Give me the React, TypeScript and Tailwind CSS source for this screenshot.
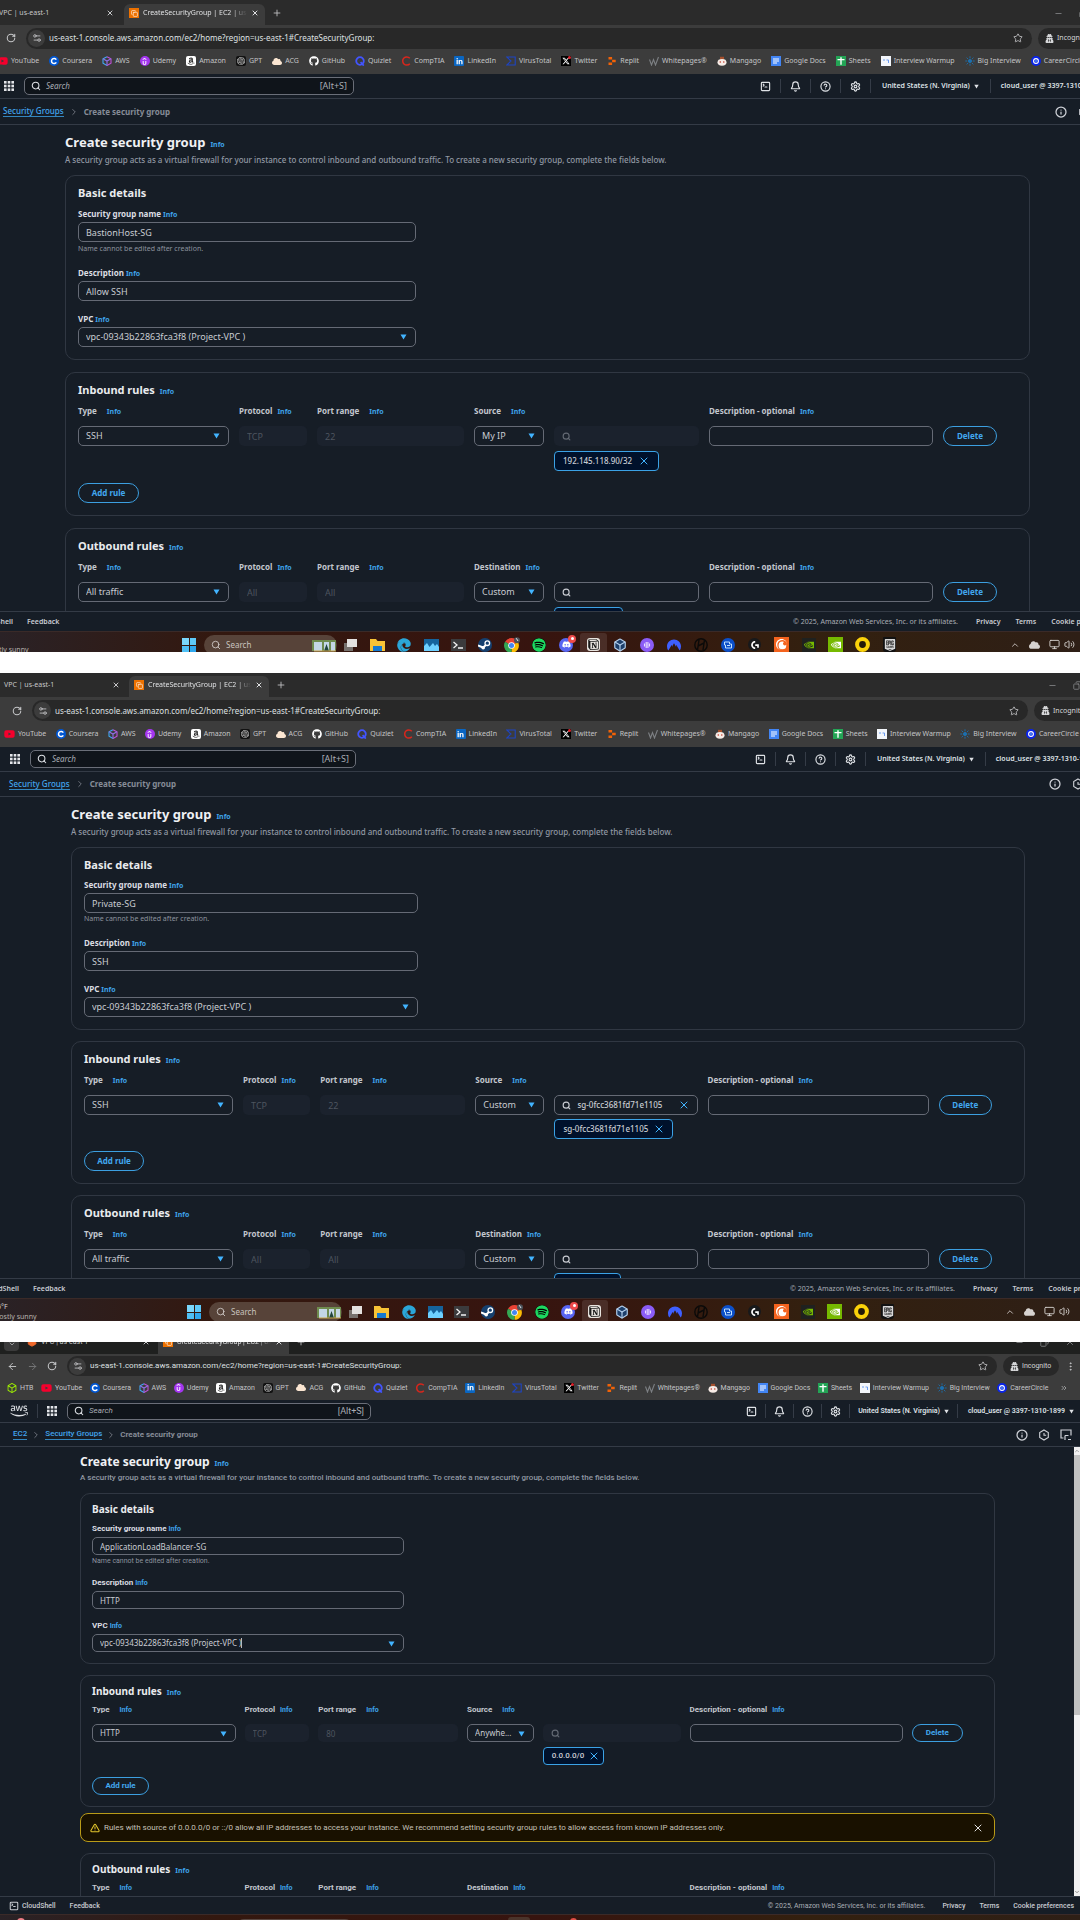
import React from "react";
import type { ReactNode } from "react";
import clsx from "clsx";
import { FaYoutube, FaAmazon, FaCloud, FaGithub, FaLinkedinIn, FaEdge, FaSpotify, FaDiscord, FaAws, FaUserSecret } from "react-icons/fa";
import { FaXTwitter } from "react-icons/fa6";
import { SiNordvpn, SiCrunchyroll, SiNvidia, SiEpicgames, SiNotion, SiOpenai, SiUdemy, SiHackthebox, SiLogitechg } from "react-icons/si";
import { AlertTriangle, ArrowLeft, ArrowRight, Bell, Box, ChevronDown, ChevronRight, ChevronUp, ChevronsRight, CircleHelp, Copy, Hexagon, Info as InfoIcon, Minus, Monitor, MoreVertical, Plus, RotateCw, Search, Settings, Settings2, SquareTerminal, Star, Volume2, X } from "lucide-react";

/* ---------- per-capture density ---------- */

type Variant = "a" | "b" | "c";

const CLS = {
  shot: {
    a: "aspect-[1080/652] font-['Noto_Sans','Open_Sans',sans-serif]",
    b: "aspect-[1080/648] font-['Noto_Sans','Open_Sans',sans-serif]",
    c: "aspect-[1080/578] font-['Roboto','Noto_Sans',sans-serif]",
  },
  strip: { a: "h-[25px] bg-[#2b2b2b]", b: "h-6 bg-[#2b2b2b]", c: "h-3 bg-[#1f201f]" },
  stripPad: { a: "-ml-[5px]", b: "ml-0", c: "ml-1" },
  firstTab: { a: "w-[129px] pl-1 pr-[10px]", b: "w-[129px] pl-1 pr-[9px]", c: "w-[139px] pl-1 pr-2" },
  activeTab: { a: "w-[141px]", b: "w-[140px]", c: "w-[131px]" },
  winMr: { a: "-mr-[34px]", b: "-mr-[28px]", c: "mr-[5px]" },
  toolbar: { a: "h-[26px] pl-[6px] -mr-[31px]", b: "h-[27px] pl-3 -mr-[27px]", c: "h-6 pl-[7px] pr-1" },
  pill: { a: "h-[21px]", b: "h-[21px]", c: "h-5" },
  marks: { a: "h-[23px] -ml-[3px] -mr-1", b: "h-[23px] ml-1 mr-px", c: "h-[22px] ml-[7px] mr-3" },
  header: { a: "h-[25px]", b: "h-[25px]", c: "h-[23px]" },
  headerIn: { a: "pl-1 -mr-[29px]", b: "pl-[10px] -mr-6", c: "pl-[10px] pr-[6px]" },
  searchBox: { a: "h-[18px] w-[330px] ml-[10px]", b: "h-[18px] w-[326px] ml-[10px]", c: "h-[17px] w-[304px] ml-[10px]" },
  iconCell: { a: "w-[30px]", b: "w-[30px]", c: "w-7" },
  region: { a: "px-[11px]", b: "px-[11px]", c: "px-2" },
  crumbs: { a: "h-[26px] pl-[3px]", b: "h-[25px] -ml-[2px]", c: "h-6 pl-[13px]" },
  crumbSep: { a: "mx-[5px]", b: "mx-[5px]", c: "mx-1" },
  crumbIcons: { a: "gap-[11px] -mr-[33px]", b: "gap-[11px] -mr-[27px]", c: "gap-[10px] mr-2" },
  main: { a: "pl-[65px] pr-[50px] pt-2", b: "pl-[71px] pr-[55px] pt-2", c: "pl-[80px] pr-[79px] pt-[7px]" },
  h1: { a: "h-[18px] text-[13px] leading-[18px]", b: "h-[18px] text-[13px] leading-[18px]", c: "h-4 text-[12px] leading-4" },
  intro: { a: "mt-[3px] mb-[9px]", b: "mt-[3px] mb-[9px]", c: "mt-[2px] mb-[9px]" },
  stack: { a: "gap-3", b: "gap-[11px]", c: "gap-[11px]" },
  card: { a: "px-3 pt-[9px] pb-3", b: "px-3 pt-[9px] pb-3", c: "px-[11px] pt-2 pb-[11px]" },
  h2: { a: "h-4 text-[11px] leading-4", b: "h-4 text-[11px] leading-4", c: "h-[14px] text-[10px] leading-[14px]" },
  fields: { a: "gap-3 w-[36%] mt-[7px]", b: "gap-3 w-[36%] mt-[6px]", c: "gap-[11px] w-[35%] mt-[7px]" },
  control: { a: "h-5 text-[9px] rounded-[5px]", b: "h-5 text-[9px] rounded-[5px]", c: "h-[18px] text-[8px] rounded-[5px] font-['Noto_Sans',sans-serif]" },
  hint: { a: "mt-px leading-3", b: "leading-3", c: "mt-px leading-[10px]" },
  rules: { a: "mt-[7px] gap-x-[10px] pr-5", b: "mt-[7px] gap-x-[10px] pr-5", c: "mt-[6px] gap-x-[9px] pr-5" },
  rowTop: { a: "mt-[9px]", b: "mt-[9px]", c: "mt-2" },
  tokenTop: { a: "mt-[5px]", b: "mt-1", c: "mt-[5px]" },
  token: { a: "h-5 gap-[6px] pr-2", b: "h-5 gap-[5px] pr-[7px]", c: "h-[18px] gap-1 pr-[3px]" },
  button: { a: "h-5 rounded-[10px]", b: "h-5 rounded-[10px]", c: "h-[18px] rounded-[9px]" },
  addTop: { a: "mt-3 w-[61px]", b: "mt-3 w-[60px]", c: "mt-3 w-[57px]" },
  footer: { a: "h-5", b: "h-5", c: "h-[18px]" },
  footLeft: { a: "-ml-[36px]", b: "-ml-[30px]", c: "ml-[9px]" },
  footRight: { a: "-mr-[37px] gap-[15px]", b: "-mr-[34px] gap-[15px]", c: "mr-[6px] gap-[14px]" },
  footLink: { a: "font-semibold", b: "font-semibold", c: "font-medium" },
  taskbar: { a: "h-[21px]", b: "h-[23px]", c: "h-[6px]" },
};

/* ---------- small drawings ---------- */

function Caret({ className }: { className?: string }) {
  return (
    <svg viewBox="0 0 8 7" className={clsx("h-[6px] w-[7px] shrink-0", className)} aria-hidden="true">
      <path d="M0.5 0.5h7L4 6.5z" fill="currentColor" />
    </svg>
  );
}

function Ec2Icon() {
  return (
    <span className="flex h-[10px] w-[10px] shrink-0 items-center justify-center bg-[#ed7100]">
      <Copy className="h-[7px] w-[7px] text-white" />
    </span>
  );
}

function GridDots() {
  return (
    <svg viewBox="0 0 10 10" className="h-[10px] w-[10px] shrink-0" fill="#e4e6ea" aria-hidden="true">
      {[0, 3.7, 7.4].map((y) => [0, 3.7, 7.4].map((x) => <rect key={`${x}-${y}`} x={x} y={y} width="2.6" height="2.6" />))}
    </svg>
  );
}

const badge = "flex h-[10px] w-[10px] shrink-0 items-center justify-center";

const MARKS: { name: string; icon: ReactNode }[] = [
  { name: "YouTube", icon: <FaYoutube className="h-[10px] w-[11px] text-[#f5002d]" /> },
  {
    name: "Coursera",
    icon: (
      <svg viewBox="0 0 10 10" className="h-[10px] w-[10px]">
        <circle cx="5" cy="5" r="5" fill="#0056d2" />
        <path d="M7.300 3.600A2.600 2.600 0 1 0 7.300 6.400" fill="none" stroke="#fff" strokeWidth="1.500" />
      </svg>
    ),
  },
  {
    name: "AWS",
    icon: (
      <svg viewBox="0 0 10 10" className="h-[10px] w-[10px]" fill="none" strokeWidth="1.1">
        <path d="M5 .7 1 2.8v4.4l4 2.2" stroke="#3fa9f5" />
        <path d="M5 .7l4 2.1v4.4L5 9.4" stroke="#c04fd8" />
        <path d="M1 2.8 5 5l4-2.2M5 5v4.4" stroke="#8f6ee6" />
      </svg>
    ),
  },
  { name: "Udemy", icon: <span className={clsx(badge, "rounded-full bg-[#a435f0] text-white")}><SiUdemy className="h-[7px] w-[7px]" /></span> },
  { name: "Amazon", icon: <span className={clsx(badge, "rounded-[2px] bg-white text-[#222]")}><FaAmazon className="h-2 w-2" /></span> },
  { name: "GPT", icon: <span className={clsx(badge, "rounded-[2px] bg-[#111] text-[#ddd]")}><SiOpenai className="h-2 w-2" /></span> },
  { name: "ACG", icon: <FaCloud className="h-[9px] w-[10px] text-[#fbe6d2]" /> },
  { name: "GitHub", icon: <FaGithub className="h-[10px] w-[10px] text-white" /> },
  {
    name: "Quizlet",
    icon: (
      <svg viewBox="0 0 10 10" className="h-[10px] w-[10px]" fill="none" stroke="#4255ff" strokeWidth="1.8">
        <circle cx="5" cy="5" r="3.8" />
        <path d="M5.6 6.2 8.8 9.6" />
      </svg>
    ),
  },
  {
    name: "CompTIA",
    icon: (
      <svg viewBox="0 0 10 10" className="h-[10px] w-[10px]" fill="none" stroke="#d9261c" strokeWidth="1.5">
        <path d="M8.8 2.2A4.1 4.1 0 1 0 8.8 7.8" />
      </svg>
    ),
  },
  { name: "LinkedIn", icon: <span className={clsx(badge, "rounded-[1px] bg-[#0a66c2] text-white")}><FaLinkedinIn className="h-[7px] w-[7px]" /></span> },
  {
    name: "VirusTotal",
    icon: (
      <svg viewBox="0 0 10 10" className="h-[10px] w-[10px]" fill="none" stroke="#1d44c4" strokeWidth="1.1">
        <path d="M.8 1h8.4v8H.8L5 5z" />
      </svg>
    ),
  },
  { name: "Twitter", icon: <span className={clsx(badge, "relative bg-black text-white")}><FaXTwitter className="h-2 w-2" /><span className="absolute right-0 top-0 h-[3px] w-[3px] rounded-full bg-[#e0202a]" /></span> },
  {
    name: "Replit",
    icon: (
      <svg viewBox="0 0 10 10" className="h-[10px] w-[10px]" fill="#f26207">
        <path d="M1.5 1h3.6v2.6H1.5zM5.1 3.7h3.6v2.6H5.1zM1.5 6.4h3.6V9H1.5z" />
      </svg>
    ),
  },
  {
    name: "Whitepages®",
    icon: (
      <svg viewBox="0 0 10 10" className="h-[10px] w-[10px]" fill="none" stroke="#7d8084" strokeWidth="1.1">
        <path d="M.5 3.5 2.5 9l2-5.5L6.5 9 9.5 1" />
      </svg>
    ),
  },
  {
    name: "Mangago",
    icon: (
      <svg viewBox="0 0 10 10" className="h-[10px] w-[10px]">
        <path d="M3 .8h4v3H3z" fill="#a5502d" />
        <ellipse cx="5" cy="6.3" rx="4.5" ry="3.4" fill="#f7ece6" />
        <circle cx="3.3" cy="6" r=".8" fill="#c0392b" />
        <circle cx="6.8" cy="6" r=".8" fill="#c0392b" />
      </svg>
    ),
  },
  {
    name: "Google Docs",
    icon: (
      <svg viewBox="0 0 10 10" className="h-[10px] w-[10px]">
        <path d="M0 0h10v10H0z" fill="#4285f4" />
        <path d="M2 3h6M2 5h6M2 7h4" stroke="#fff" strokeWidth="1" />
      </svg>
    ),
  },
  {
    name: "Sheets",
    icon: (
      <svg viewBox="0 0 10 10" className="h-[10px] w-[10px]">
        <path d="M0 0h10v10H0z" fill="#23a455" />
        <path d="M1.5 3.6h7M5 1.2v7.6" stroke="#fff" strokeWidth="1.4" />
      </svg>
    ),
  },
  {
    name: "Interview Warmup",
    icon: (
      <svg viewBox="0 0 10 10" className="h-[10px] w-[10px]">
        <path d="M0 0h10v10H0z" fill="#f3f6fb" />
        <path d="M2 4h2M5.5 4h2v3" stroke="#6b9cf0" strokeWidth="1" fill="none" />
      </svg>
    ),
  },
  {
    name: "Big Interview",
    icon: (
      <svg viewBox="0 0 10 10" className="h-[10px] w-[10px]" stroke="#1c6fae" strokeWidth=".9">
        <circle cx="5" cy="5" r="1.6" fill="#1c6fae" />
        <path d="M5 .3v2M5 7.7v2M.3 5h2M7.7 5h2M1.6 1.6l1.5 1.5M6.9 6.9l1.5 1.5M1.6 8.4l1.5-1.5M6.9 3.1l1.5-1.5" />
      </svg>
    ),
  },
  {
    name: "CareerCircle",
    icon: (
      <svg viewBox="0 0 10 10" className="h-[10px] w-[10px]">
        <circle cx="5" cy="5" r="5" fill="#0a24e8" />
        <circle cx="5" cy="5" r="2.4" fill="none" stroke="#fff" strokeWidth="1.1" />
        <circle cx="5" cy="5" r=".8" fill="#7ee0ff" />
      </svg>
    ),
  },
];

/* ---------- browser chrome ---------- */

function TabStrip({ v }: { v: Variant }) {
  const c = v === "c";
  return (
    <div className={clsx("flex shrink-0 flex-col justify-end overflow-hidden", CLS.strip[v])}>
      <div className={clsx("flex h-[21px] shrink-0 items-center text-[7px] leading-[10px] text-[#c6c7c9]", CLS.stripPad[v])}>
        {c && (
          <button aria-label="Search tabs" className="flex h-[15px] w-[15px] items-center justify-center rounded-[4px] bg-[#3b3b3b]">
            <ChevronDown className="h-2 w-2" />
          </button>
        )}
        <div className={clsx("flex items-center whitespace-nowrap pb-[3px]", CLS.firstTab[v])}>
          {c && <Hexagon className="mx-1 h-[10px] w-[10px] fill-[#f0692b] text-[#f0692b]" />}
          <span>VPC | us-east-1</span>
          <button aria-label="Close tab" className="ml-auto"><X className="h-2 w-2" strokeWidth={3} /></button>
        </div>
        <div className={clsx("flex h-[21px] items-center rounded-t-[6px] bg-[#3c3c3c] pb-[3px] pl-[5px] pr-[6px] text-[#dfe0e2]", CLS.activeTab[v])}>
          <Ec2Icon />
          <span className="ml-1 min-w-0 flex-1 overflow-hidden whitespace-nowrap [mask-image:linear-gradient(to_right,black_85%,transparent)]">CreateSecurityGroup | EC2 | us-east-1</span>
          <button aria-label="Close tab" className="ml-1"><X className="h-2 w-2" strokeWidth={3} /></button>
        </div>
        <button aria-label="New tab" className="ml-[7px] pb-[3px]"><Plus className="h-[10px] w-[10px]" /></button>
        <div className={clsx("ml-auto flex items-center gap-4 pb-[3px] text-[#8e8f91]", CLS.winMr[v])}>
          <Minus className="h-[9px] w-[9px]" />
          <Copy className="h-[9px] w-[9px] -scale-x-100" />
          <X className="h-[10px] w-[10px]" />
        </div>
      </div>
    </div>
  );
}

function Toolbar({ v }: { v: Variant }) {
  return (
    <div className={clsx("flex shrink-0 items-center text-[#c6c7c9]", CLS.toolbar[v])}>
      {v === "c" && (
        <>
          <button aria-label="Back" className="mr-[9px]"><ArrowLeft className="h-[11px] w-[11px]" /></button>
          <button aria-label="Forward" className="mr-[9px] text-[#77787a]"><ArrowRight className="h-[11px] w-[11px]" /></button>
        </>
      )}
      <button aria-label="Reload" className="mr-[10px]"><RotateCw className="h-[10px] w-[10px]" strokeWidth={2.5} /></button>
      <div className={clsx("flex min-w-0 flex-1 items-center rounded-full bg-[#282828] pl-[2px] pr-[9px]", CLS.pill[v])}>
        <span className="flex h-[17px] w-[17px] items-center justify-center rounded-full bg-[#3c3c3c]">
          <Settings2 className="h-[10px] w-[10px]" />
        </span>
        <input aria-label="Address" className="ml-1 min-w-0 flex-1 bg-transparent text-[8px] leading-[12px] text-[#dfe0e2] outline-none" defaultValue="us-east-1.console.aws.amazon.com/ec2/home?region=us-east-1#CreateSecurityGroup:" />
        <Star className="h-[10px] w-[10px]" />
      </div>
      <button className={clsx("ml-[6px] flex w-[56px] items-center gap-[3px] rounded-full bg-[#282828] pl-[7px] text-[7px] leading-[10px] text-[#d6d7d9]", CLS.pill[v])}>
        <FaUserSecret className="h-[9px] w-[9px]" />
        Incognito
      </button>
      <button aria-label="Menu" className="ml-[6px]"><MoreVertical className="h-[11px] w-[11px]" /></button>
    </div>
  );
}

function Bookmarks({ v }: { v: Variant }) {
  return (
    <nav aria-label="Bookmarks" className={clsx("flex shrink-0 items-center justify-between whitespace-nowrap pb-[3px] text-[7px] leading-[10px] text-[#c4c5c7]", CLS.marks[v])}>
      {v === "c" && (
        <a href="#htb" className="flex items-center gap-[3px]"><SiHackthebox className="h-[10px] w-[10px] text-[#9fef00]" />HTB</a>
      )}
      {MARKS.map((m) => (
        <a key={m.name} href={`#${m.name}`} className="flex items-center gap-[3px]">
          {m.icon}
          {m.name}
        </a>
      ))}
      {v === "c" && <ChevronsRight className="ml-1 h-2 w-2" />}
    </nav>
  );
}

/* ---------- console ---------- */

function ConsoleHeader({ v }: { v: Variant }) {
  const cell = clsx("flex h-[14px] items-center justify-center border-r border-[#353c47]", CLS.iconCell[v]);
  return (
    <header className={clsx("shrink-0 border-b border-[#343b46]", CLS.header[v])}>
      <div className={clsx("flex h-full items-center text-[#dfe2e6]", CLS.headerIn[v])}>
        {v === "c" && (
          <a href="#home" aria-label="AWS home" className="mr-[9px] flex h-[14px] items-center border-r border-[#353c47] pr-[9px]"><FaAws className="h-[18px] w-[18px]" /></a>
        )}
        <GridDots />
        <label className={clsx("flex shrink-0 items-center rounded-[5px] border border-[#6a6e78] bg-[#0f141a] px-[6px]", CLS.searchBox[v])}>
          <Search className="h-[10px] w-[10px]" strokeWidth={2.5} />
          <input aria-label="Search services" placeholder="Search" className="ml-[5px] min-w-0 flex-1 bg-transparent text-[8px] italic leading-[12px] outline-none placeholder:text-[#a9adb5]" />
          <span className="text-[9px] leading-[12px] text-[#a9adb5]">[Alt+S]</span>
        </label>
        <div className="ml-auto flex items-center">
          <button aria-label="CloudShell" className={cell}><SquareTerminal className="h-[11px] w-[11px]" strokeWidth={2.5} /></button>
          <button aria-label="Notifications" className={cell}><Bell className="h-[11px] w-[11px]" strokeWidth={2.5} /></button>
          <button aria-label="Help" className={cell}><CircleHelp className="h-[11px] w-[11px]" strokeWidth={2.5} /></button>
          <button aria-label="Settings" className={cell}><Settings className="h-[11px] w-[11px]" strokeWidth={2.5} /></button>
          <button className={clsx("flex h-[14px] items-center gap-1 whitespace-nowrap border-r border-[#353c47] text-[7px] font-semibold leading-[10px]", CLS.region[v])}>
            United States (N. Virginia) <Caret className="!h-[5px] !w-[5px]" />
          </button>
          <button className="flex items-center gap-1 whitespace-nowrap pl-[10px] text-[7px] font-semibold leading-[10px]">
            cloud_user @ 3397-1310-1899 <Caret className="!h-[5px] !w-[5px]" />
          </button>
        </div>
      </div>
    </header>
  );
}

function Crumbs({ v }: { v: Variant }) {
  const sep = <ChevronRight className={clsx("h-[10px] w-[10px] shrink-0 text-[#7d828c]", CLS.crumbSep[v])} />;
  const link = "whitespace-nowrap border-b border-[#42b4ff]/70 text-[#42a5ee]";
  return (
    <nav aria-label="Breadcrumb" className={clsx("flex shrink-0 items-center border-b border-[#343b46] text-[8px] font-medium leading-[10px]", CLS.crumbs[v])}>
      {v === "c" && (
        <>
          <a href="#ec2" className={link}>EC2</a>
          {sep}
        </>
      )}
      {v === "b" && <ChevronRight className="-ml-[5px] mr-[6px] h-[10px] w-[10px] shrink-0 text-[#7d828c]" />}
      <a href="#groups" className={link}>Security Groups</a>
      {sep}
      <span className="font-bold text-[#868c97]">Create security group</span>
      <div className={clsx("ml-auto flex items-center text-[#cfd2d8]", CLS.crumbIcons[v])}>
        <button aria-label="Info"><InfoIcon className="h-3 w-3" strokeWidth={2.5} /></button>
        <button aria-label="Tools">
          <svg viewBox="0 0 12 12" className="h-3 w-3" fill="none" stroke="currentColor" strokeWidth="1.1">
            <path d="M6 1l4.3 2.5v5L6 11 1.7 8.500v-5z" />
            <path d="M6 4v2.200h2.200" />
          </svg>
        </button>
        <button aria-label="Feedback panel">
          <svg viewBox="0 0 12 12" className="h-3 w-3" fill="none" stroke="currentColor" strokeWidth="1.2">
            <path d="M11 6.5V1H1v8h2.5M5 11V6.5M5 6.5h3.5M8 10.5h3" />
          </svg>
        </button>
      </div>
    </nav>
  );
}

function Info() {
  return <a href="#info" className="text-[7px] font-bold leading-[12px] text-[#3fa3ea]">Info</a>;
}

const control = "w-full min-w-0 border border-[#656a75] bg-transparent text-[#c9ccd2] outline-none";

function Field({ v, id, label, value, hint }: { v: Variant; id: string; label: string; value: string; hint?: string }) {
  return (
    <div className="flex flex-col">
      <div className="flex h-3 items-baseline gap-[2px]">
        <label htmlFor={id} className="text-[8px] font-bold leading-[12px] text-[#dcdee3]">{label}</label>
        <Info />
      </div>
      <input id={id} defaultValue={value} className={clsx("mt-[2px] px-[7px]", control, CLS.control[v])} />
      {hint && <p className={clsx("text-[7px] text-[#8d939e]", CLS.hint[v])}>{hint}</p>}
    </div>
  );
}

function Select({ v, id, value }: { v: Variant; id: string; value: string }) {
  return (
    <div className="relative min-w-0">
      <select id={id} defaultValue={value} className={clsx("block appearance-none pl-[7px] pr-3", control, CLS.control[v])}>
        <option className="bg-[#161d26]">{value}</option>
      </select>
      <Caret className="pointer-events-none absolute right-[9px] top-[7px] text-[#42b4ff]" />
    </div>
  );
}

type Rule = { type: string; protocol: string; port: string; origin: string; query: string; queryOff: boolean; token: string };

function HeadCell({ htmlFor, children, wide }: { htmlFor: string; children: ReactNode; wide?: boolean }) {
  return (
    <div className={clsx("flex h-3 min-w-0 items-baseline whitespace-nowrap", wide ? "gap-[10px]" : "gap-[5px]")}>
      <label htmlFor={htmlFor} className="text-[8px] font-bold leading-[12px] text-[#c3c7ce]">{children}</label>
      <Info />
    </div>
  );
}

function RulesCard({ v, id, title, origin, rule }: { v: Variant; id: string; title: string; origin: string; rule: Rule }) {
  const off = clsx("w-full min-w-0 bg-[#1b222d] px-2 text-[#4d545f] outline-none", CLS.control[v], CLS.rowTop[v]);
  return (
    <section className={clsx("shrink-0 rounded-[10px] border border-[#303742]", CLS.card[v])}>
      <h2 className={clsx("flex items-baseline gap-[5px] font-['Noto_Sans',sans-serif] font-bold text-[#e9ebee]", CLS.h2[v])}>{title} <Info /></h2>
      <div className={clsx("grid grid-cols-[minmax(0,151fr)_minmax(0,68fr)_minmax(0,147fr)_minmax(0,70fr)_minmax(0,145fr)_minmax(0,224fr)_minmax(0,54fr)]", CLS.rules[v])}>
        <HeadCell htmlFor={`${id}-type`} wide>Type</HeadCell>
        <HeadCell htmlFor={`${id}-protocol`}>Protocol</HeadCell>
        <HeadCell htmlFor={`${id}-port`} wide>Port range</HeadCell>
        <HeadCell htmlFor={`${id}-origin`} wide={origin === "Source"}>{origin}</HeadCell>
        <span />
        <HeadCell htmlFor={`${id}-desc`}>Description - optional</HeadCell>
        <span />

        <div className={CLS.rowTop[v]}><Select v={v} id={`${id}-type`} value={rule.type} /></div>
        <input id={`${id}-protocol`} disabled defaultValue={rule.protocol} className={off} />
        <input id={`${id}-port`} disabled defaultValue={rule.port} className={off} />
        <div className={CLS.rowTop[v]}><Select v={v} id={`${id}-origin`} value={rule.origin} /></div>
        <div className={clsx("flex min-w-0 items-center border px-[7px]", CLS.control[v], CLS.rowTop[v], rule.queryOff ? "border-transparent bg-[#1b222d] text-[#636973]" : "border-[#656a75] text-[#c9ccd2]")}>
          <Search className="h-[9px] w-[9px] shrink-0" strokeWidth={3} />
          <input aria-label={`${title} ${origin} search`} disabled={rule.queryOff} defaultValue={rule.query} className="ml-[6px] min-w-0 flex-1 bg-transparent text-[8px] font-medium outline-none" />
          {rule.query && <button aria-label="Clear" className="text-[#42b4ff]"><X className="h-3 w-3" /></button>}
        </div>
        <input id={`${id}-desc`} className={clsx("px-[7px]", control, CLS.control[v], CLS.rowTop[v])} />
        <button className={clsx("border border-[#3c9fe0] text-[8px] font-bold leading-[10px] text-[#42a8f0]", CLS.button[v], CLS.rowTop[v])}>Delete</button>

        <div className={clsx("col-span-2 col-start-5 flex", CLS.tokenTop[v])}>
          <span className={clsx("flex items-center rounded-[4px] border border-[#3ba2e6] bg-[#00112b] pl-2 text-[8px] font-medium text-[#c9ccd2]", CLS.token[v])}>
            {rule.token}
            <button aria-label={`Remove ${rule.token}`} className="text-[#42b4ff]"><X className="h-3 w-3" /></button>
          </span>
        </div>
      </div>
      <button className={clsx("border border-[#3c9fe0] text-[8px] font-bold leading-[10px] text-[#42a8f0]", CLS.button[v], CLS.addTop[v])}>Add rule</button>
    </section>
  );
}

function Footer({ v }: { v: Variant }) {
  const link = CLS.footLink[v];
  return (
    <footer className={clsx("flex shrink-0 items-center whitespace-nowrap border-t border-[#343b46] text-[7px] leading-[10px] text-[#c9ccd2]", CLS.footer[v])}>
      <a href="#cloudshell" className={clsx("flex items-center gap-[3px]", link, CLS.footLeft[v])}>
        <SquareTerminal className="h-[10px] w-[10px]" strokeWidth={2.5} />CloudShell
      </a>
      <a href="#feedback" className={clsx("ml-[14px]", link)}>Feedback</a>
      <div className={clsx("ml-auto flex items-center", CLS.footRight[v])}>
        <span className="mr-[3px] text-[#a9adb5]">© 2025, Amazon Web Services, Inc. or its affiliates.</span>
        <a href="#privacy" className={link}>Privacy</a>
        <a href="#terms" className={link}>Terms</a>
        <a href="#cookies" className={link}>Cookie preferences</a>
      </div>
    </footer>
  );
}

/* ---------- taskbar ---------- */

const APPS: { name: string; icon: ReactNode; active?: boolean }[] = [
  { name: "Task view", icon: <svg viewBox="0 0 15 14" className="h-[14px] w-[15px]"><path d="M1 5h9v8H1z" fill="#77716d" /><path d="M4 1h10v8H4z" fill="#e3e1df" /></svg> },
  { name: "Explorer", icon: <svg viewBox="0 0 15 14" className="h-[14px] w-[15px]"><path d="M0 1h6l1.5 2H15v10H0z" fill="#f8c336" /><path d="M3 8h9v5H3z" fill="#1479d1" /></svg> },
  { name: "Edge", icon: <FaEdge className="h-[14px] w-[14px] text-[#2ba6d8]" /> },
  { name: "Monitor", icon: <svg viewBox="0 0 15 14" className="h-[14px] w-[15px]"><path d="M0 1h15v12H0z" fill="#15639c" /><path d="M0 13V8l3-3 2.500 4L9 5l2 3 2-2 2 3v4z" fill="#6ed0ff" /></svg> },
  { name: "Terminal", icon: <svg viewBox="0 0 15 14" className="h-[14px] w-[15px]"><path d="M0 1h15v12H0z" fill="#3b3b3d" /><path d="M2.500 4 6 7 2.500 10M7 10h5" stroke="#f2f2f2" strokeWidth="1.300" fill="none" /></svg> },
  {
    name: "Steam",
    icon: (
      <svg viewBox="0 0 14 14" className="h-[14px] w-[14px]">
        <circle cx="7" cy="7" r="7" fill="#15406f" />
        <path d="M0 7.500 5 9.500 8 7" stroke="#fff" strokeWidth="2" fill="none" />
        <circle cx="9.300" cy="5.200" r="2.300" fill="none" stroke="#fff" strokeWidth="1.300" />
        <circle cx="5.200" cy="9.800" r="1.800" fill="#fff" />
      </svg>
    ),
  },
  {
    name: "Chrome",
    icon: (
      <svg viewBox="0 0 16 16" className="h-4 w-4">
        <path d="M7.500 8.500 1.100 4.800A7.300 7.300 0 0 1 14 5z" fill="#ea4335" />
        <path d="M7.500 8.500 14 5a7.300 7.300 0 0 1-6.500 10.800z" fill="#fbbc04" />
        <path d="M7.500 8.500v7.300A7.300 7.300 0 0 1 1.100 4.800z" fill="#34a853" />
        <circle cx="7.500" cy="8.500" r="3.300" fill="#fff" />
        <circle cx="7.500" cy="8.500" r="2.500" fill="#4285f4" />
        <circle cx="13" cy="3.200" r="3" fill="#4c5259" />
        <path d="M12.200 1.200 14 4" stroke="#dfe7ee" />
      </svg>
    ),
  },
  { name: "Spotify", icon: <FaSpotify className="h-[14px] w-[14px] rounded-full bg-black text-[#1ed760]" /> },
  { name: "Discord", icon: <span className="relative flex h-[14px] w-[14px] items-center justify-center rounded-full bg-[#5865f2]"><FaDiscord className="h-[9px] w-[9px] text-white" /><span className="absolute -right-[3px] -top-[3px] flex h-2 w-2 items-center justify-center rounded-full bg-[#ee4b4b]"><span className="h-[3px] w-[3px] rounded-full bg-white" /></span></span> },
  { name: "Notion", active: true, icon: <span className="flex h-[13px] w-[13px] items-center justify-center rounded-[3px] bg-[#e8e4df]"><SiNotion className="h-[11px] w-[11px] text-[#1a1a1a]" /></span> },
  { name: "VirtualBox", icon: <Box className="h-[14px] w-[14px] fill-[#1d3f6b] text-[#b3cfec]" /> },
  { name: "Voice", icon: <svg viewBox="0 0 14 14" className="h-[14px] w-[14px]"><circle cx="7" cy="7" r="7" fill="#8b5cf6" /><path d="M4.500 5.500v3M6.200 4v6M7.900 4v6M9.500 5.500v3" stroke="#e7dcff" strokeWidth="1.100" /></svg> },
  { name: "NordVPN", icon: <SiNordvpn className="h-[14px] w-[14px] text-[#3e5fff]" /> },
  { name: "Hunter", icon: <svg viewBox="0 0 14 14" className="h-[14px] w-[14px]" fill="none" stroke="#0b0a09" strokeWidth="1.400"><circle cx="7" cy="7" r="6.200" /><path d="M5 2 3.500 12M10.500 2 9 12M4 8l6-3" /></svg> },
  { name: "Link", icon: <svg viewBox="0 0 14 14" className="h-[14px] w-[14px]"><circle cx="7" cy="7" r="7" fill="#0b4fc9" /><path d="M3.500 4h5v2h2v4h-6V7h-1zM6 7.500h3" stroke="#bfe0ff" fill="none" /></svg> },
  { name: "Logitech G", icon: <span className="flex h-[13px] w-[13px] items-center justify-center rounded-full bg-[#17191b]"><SiLogitechg className="h-2 w-2 text-white" /></span> },
  { name: "Crunchyroll", icon: <span className="flex h-[15px] w-[15px] items-center justify-center bg-[#f4631e]"><SiCrunchyroll className="h-[11px] w-[11px] text-white" /></span> },
  { name: "NVIDIA", icon: <span className="flex h-[14px] w-[14px] items-center justify-center bg-[#1f211f]"><SiNvidia className="h-[10px] w-[10px] text-[#76b900]" /></span> },
  { name: "GeForce", icon: <span className="flex h-[15px] w-[15px] items-center justify-center bg-[#76b900]"><SiNvidia className="h-[10px] w-[10px] text-white" /></span> },
  { name: "Ring", icon: <svg viewBox="0 0 15 15" className="h-[15px] w-[15px]"><circle cx="7.500" cy="7.500" r="5.400" fill="#241a08" stroke="#fbd20a" strokeWidth="4" /></svg> },
  { name: "Epic", icon: <span className="flex h-[15px] w-[13px] items-center justify-center rounded-b-[3px] rounded-t-[1px] bg-[#121212]"><SiEpicgames className="h-3 w-3 text-[#d8d8d8]" /></span> },
];

function Taskbar({ v }: { v: Variant }) {
  const b = v === "b";
  return (
    <div className={clsx("flex shrink-0 items-start overflow-hidden border-t border-[#3a2a28] bg-[linear-gradient(to_right,#2a2226,#33180f_20%,#37140f_50%,#33200f_75%,#2e1f16)] text-[#d7d3d0]", CLS.taskbar[v])}>
      {v === "c" ? (
        <div className="flex w-full">
          <span className="ml-[17px] mt-[3px] h-2 w-2 shrink-0 rounded-full bg-[#f08088]" />
          <span className="ml-[211px] mt-1 h-4 w-[117px] shrink-0 rounded-full bg-[#574640]" />
          <span className="ml-[155px] mt-[2px] h-4 w-[22px] shrink-0 rounded-[3px] bg-[#4a342b]" />
          <span className="ml-[40px] mt-[3px] h-2 w-[7px] shrink-0 rounded-full bg-[#e05048]" />
        </div>
      ) : (
        <>
          <div className={clsx("flex shrink-0 flex-col whitespace-nowrap text-[7px] leading-[10px]", b ? "-ml-[7px] w-[194px] pt-[3px]" : "-ml-[15px] w-[197px] pt-[13px]")}>
            {b && <span>76°F</span>}
            <span className="text-[#b7b1ad]">Mostly sunny</span>
          </div>
          <button aria-label="Start" className="mt-[6px] grid h-[14px] w-[14px] shrink-0 grid-cols-2 gap-px">
            <span className="bg-[#7ad7fb]" /><span className="bg-[#5fcaf9]" /><span className="bg-[#4fc0f5]" /><span className="bg-[#2fa8ee]" />
          </button>
          <label className="ml-2 mt-[3px] flex h-[20px] w-[133px] shrink-0 items-center rounded-full bg-[#574339] pl-[7px]">
            <Search className="h-[10px] w-[10px] shrink-0" />
            <input aria-label="Search Windows" placeholder="Search" className="ml-[5px] w-16 bg-transparent text-[8px] outline-none placeholder:text-[#c9c3bf]" />
            <svg viewBox="0 0 25 13" className="ml-auto h-[13px] w-[25px]" aria-hidden="true">
              <path d="M0 1h24v11H0z" fill="#6f8c4f" />
              <path d="M2 3h8v9H2zM12 3h5v9h-5zM19 3h4v9h-4z" fill="#c4d7e6" />
              <path d="M12 12l2.500-7 2.500 7z" fill="#22463c" />
              <path d="M2 12h22" stroke="#caa448" />
            </svg>
          </label>
          <div className={clsx("flex shrink-0", b ? "w-[559px]" : "w-[566px]")}>
            {APPS.map((a) => (
              <button key={a.name} aria-label={a.name} className={clsx("mt-px flex h-[23px] flex-1 items-center justify-center rounded-[3px]", a.active && "bg-white/10")}>{a.icon}</button>
            ))}
          </div>
          <div className={clsx("ml-auto mt-[7px] flex shrink-0 items-center gap-[9px]", b ? "mr-[10px]" : "mr-[5px]")}>
            <ChevronUp className="h-[10px] w-[10px]" />
            <FaCloud className="h-[10px] w-[11px]" />
            <span className="flex items-center gap-[4px]"><Monitor className="h-[11px] w-[11px]" /><Volume2 className="h-[11px] w-[11px]" /></span>
          </div>
        </>
      )}
    </div>
  );
}

/* ---------- one capture ---------- */

type Shot = { v: Variant; name: string; description: string; inbound: Rule };

const OUTBOUND: Rule = { type: "All traffic", protocol: "All", port: "All", origin: "Custom", query: "", queryOff: false, token: "0.0.0.0/0" };

function Capture({ v, name, description, inbound }: Shot) {
  return (
    <section className={clsx("flex w-full flex-col overflow-hidden bg-[#161d26]", CLS.shot[v])}>
      <TabStrip v={v} />
      <div className="shrink-0 overflow-hidden bg-[#3c3c3c]">
        <Toolbar v={v} />
        <Bookmarks v={v} />
      </div>
      <ConsoleHeader v={v} />
      <Crumbs v={v} />
      <div className="flex min-h-0 flex-1">
        <main className={clsx("min-w-0 flex-1 overflow-hidden", CLS.main[v])}>
          <h1 className={clsx("flex items-baseline gap-[5px] font-['Noto_Sans',sans-serif] font-bold text-[#f0f1f4]", CLS.h1[v])}>Create security group <Info /></h1>
          <p className={clsx("text-[8px] font-medium leading-[12px] text-[#9198a3]", CLS.intro[v])}>
            A security group acts as a virtual firewall for your instance to control inbound and outbound traffic. To create a new security group, complete the fields below.
          </p>
          <div className={clsx("flex flex-col", CLS.stack[v])}>
            <section className={clsx("rounded-[10px] border border-[#303742]", CLS.card[v])}>
              <h2 className={clsx("font-['Noto_Sans',sans-serif] font-bold text-[#e9ebee]", CLS.h2[v])}>Basic details</h2>
              <div className={clsx("flex flex-col", CLS.fields[v])}>
                <Field v={v} id={`${v}-name`} label="Security group name" value={name} hint="Name cannot be edited after creation." />
                <Field v={v} id={`${v}-description`} label="Description" value={description} />
                <div className="flex flex-col">
                  <div className="mb-[2px] flex h-3 items-baseline gap-[2px]">
                    <label htmlFor={`${v}-vpc`} className="text-[8px] font-bold leading-[12px] text-[#dcdee3]">VPC</label>
                    <Info />
                  </div>
                  <div className="relative">
                    <Select v={v} id={`${v}-vpc`} value="vpc-09343b22863fca3f8 (Project-VPC )" />
                    {v === "c" && <span className="absolute left-[149px] top-1 h-[10px] w-px bg-[#b6bac1]" />}
                  </div>
                </div>
              </div>
            </section>
            <div className="flex flex-col gap-[6px]">
              <RulesCard v={v} id={`${v}-in`} title="Inbound rules" origin="Source" rule={inbound} />
              {v === "c" && (
                <div role="alert" className="flex h-[29px] items-center rounded-[8px] border border-[#b99b18] bg-[#191100] pl-[9px] pr-[10px] text-[8px] leading-[12px] text-[#c4c0b8]">
                  <AlertTriangle className="mr-1 h-[10px] w-[10px] text-[#e3c62c]" strokeWidth={2.5} />
                  Rules with source of 0.0.0.0/0 or ::/0 allow all IP addresses to access your instance. We recommend setting security group rules to allow access from known IP addresses only.
                  <button aria-label="Dismiss" className="ml-auto text-[#e0e0e0]"><X className="h-3 w-3" /></button>
                </div>
              )}
            </div>
            <RulesCard v={v} id={`${v}-out`} title="Outbound rules" origin="Destination" rule={OUTBOUND} />
          </div>
        </main>
        {v === "c" && (
          <div className="flex w-[6px] shrink-0 flex-col items-center bg-[#f1f1f1]">
            <ChevronUp className="h-2 w-[6px] shrink-0 text-[#555]" />
            <div className="h-[58%] w-full bg-[#c1c1c1]" />
            <ChevronDown className="mt-auto h-2 w-[6px] shrink-0 text-[#333]" />
          </div>
        )}
      </div>
      <Footer v={v} />
      <Taskbar v={v} />
    </section>
  );
}

const SHOTS: Shot[] = [
  { v: "a", name: "BastionHost-SG", description: "Allow SSH", inbound: { type: "SSH", protocol: "TCP", port: "22", origin: "My IP", query: "", queryOff: true, token: "192.145.118.90/32" } },
  { v: "b", name: "Private-SG", description: "SSH", inbound: { type: "SSH", protocol: "TCP", port: "22", origin: "Custom", query: "sg-0fcc3681fd71e1105", queryOff: false, token: "sg-0fcc3681fd71e1105" } },
  { v: "c", name: "ApplicationLoadBalancer-SG", description: "HTTP", inbound: { type: "HTTP", protocol: "TCP", port: "80", origin: "Anywhe...", query: "", queryOff: true, token: "0.0.0.0/0" } },
];

export default function App() {
  return (
    <div className="flex flex-col gap-[21px] bg-white">
      {SHOTS.map((s) => (
        <Capture key={s.v} {...s} />
      ))}
    </div>
  );
}
